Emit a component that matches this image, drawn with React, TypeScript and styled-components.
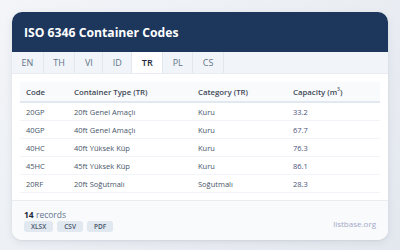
import React from 'react'
import styled, { createGlobalStyle } from 'styled-components';

const GlobalStyle = createGlobalStyle`
  html, body {
    margin: 0;
    padding: 0;
  }
  body {
    width: 400px;
    height: 250px;
    overflow: hidden;
    font-family: "Open Sans", "Noto Sans", sans-serif;
    background: linear-gradient(135deg, #f3f5f8 0%, #e3e8ef 100%);
  }
`;

const rows = [
  { code: '20GP', type: '20ft Genel Amaçlı', category: 'Kuru', capacity: '33.2' },
  { code: '40GP', type: '40ft Genel Amaçlı', category: 'Kuru', capacity: '67.7' },
  { code: '40HC', type: '40ft Yüksek Küp', category: 'Kuru', capacity: '76.3' },
  { code: '45HC', type: '45ft Yüksek Küp', category: 'Kuru', capacity: '86.1' },
  { code: '20RF', type: '20ft Soğutmalı', category: 'Soğutmalı', capacity: '28.3' },
];

const langs = ['EN', 'TH', 'VI', 'ID', 'TR', 'PL', 'CS'];

function App() {
  return (
    <Page>
      <GlobalStyle />
      <Card>
        <Header>ISO 6346 Container Codes</Header>
        <Tabs>
          {langs.map((l) => (
            <Tab key={l} $active={l === 'TR'}>{l}</Tab>
          ))}
        </Tabs>
        <Body>
          <Table>
            <thead>
              <tr>
                <Th $w={36}>Code</Th>
                <Th $w={112}>Container Type (TR)</Th>
                <Th $w={83}>Category (TR)</Th>
                <Th>Capacity (m<sup>3</sup>)</Th>
              </tr>
            </thead>
            <tbody>
              {rows.map((r) => (
                <tr key={r.code}>
                  <Td>{r.code}</Td>
                  <Td>{r.type}</Td>
                  <Td>{r.category}</Td>
                  <Td $num>{r.capacity}</Td>
                </tr>
              ))}
            </tbody>
          </Table>
        </Body>
        <Footer>
          <div>
            <Count><b>14</b> records</Count>
            <Buttons>
              <ExportButton>XLSX</ExportButton>
              <ExportButton>CSV</ExportButton>
              <ExportButton>PDF</ExportButton>
            </Buttons>
          </div>
          <Brand>listbase.org</Brand>
        </Footer>
      </Card>
    </Page>
  )
}

export default App;

const Page = styled.div`
  padding: 12px;
  box-sizing: border-box;
  width: 400px;
  height: 250px;
`;

const Card = styled.div`
  background: #fff;
  border-radius: 10px;
  overflow: hidden;
  box-shadow: 0 2px 8px rgba(30, 41, 59, 0.08), 0 1px 2px rgba(30, 41, 59, 0.06);
`;

const Header = styled.div`
  background: #1d365c;
  color: #fff;
  height: 40px;
  padding: 0 12px;
  display: flex;
  align-items: center;
  font-size: 12.2px;
  font-weight: 700;
`;

const Tabs = styled.div`
  display: flex;
  background: #f1f4f8;
  border-bottom: 1px solid #e8ecf1;
  height: 21px;
`;

const Tab = styled.div<{ $active?: boolean }>`
  display: flex;
  align-items: center;
  justify-content: center;
  padding: 0 9.5px;
  font-size: 9px;
  color: ${(p) => (p.$active ? '#1e293b' : '#64748b')};
  background: ${(p) => (p.$active ? '#fff' : 'transparent')};
  font-weight: ${(p) => (p.$active ? 600 : 400)};
  border-right: 1px solid #e2e8f0;
`;

const Body = styled.div`
  padding: 8px 8px 7px;
`;

const Table = styled.table`
  width: 100%;
  border-collapse: collapse;
  table-layout: fixed;
`;

const Th = styled.th<{ $w?: number }>`
  width: ${(p) => (p.$w ? `${p.$w}px` : 'auto')};
  text-align: left;
  font-size: 7.8px;
  font-weight: 600;
  color: #3f4856;
  background: #f8fafc;
  padding: 0 6px;
  height: 19px;
  border-bottom: 2px solid #e2e8f0;
  white-space: nowrap;
  sup {
    font-size: 5px;
    line-height: 0;
  }
`;

const Td = styled.td<{ $num?: boolean }>`
  padding: 0 6px;
  height: 17px;
  font-size: 7.5px;
  color: ${(p) => (p.$num ? '#4a5178' : '#475569')};
  border-bottom: 1px solid #f1f5f9;
  white-space: nowrap;
`;

const Footer = styled.div`
  background: #f8fafc;
  border-top: 1px solid #e8ecf1;
  padding: 8px 12px 8px;
  display: flex;
  justify-content: space-between;
  align-items: center;
`;

const Count = styled.div`
  font-size: 8.5px;
  line-height: 11px;
  color: #64748b;
  b {
    color: #1e293b;
    font-weight: 700;
  }
`;

const Buttons = styled.div`
  display: flex;
  gap: 4px;
  margin-top: 1px;
`;

const ExportButton = styled.div`
  background: #e2e8f0;
  color: #475569;
  font-size: 6.5px;
  line-height: 9px;
  font-weight: 600;
  padding: 1px 7px;
  border-radius: 3px;
`;

const Brand = styled.div`
  font-size: 8px;
  color: #a3a8c6;
  margin-top: 6px;
`;
